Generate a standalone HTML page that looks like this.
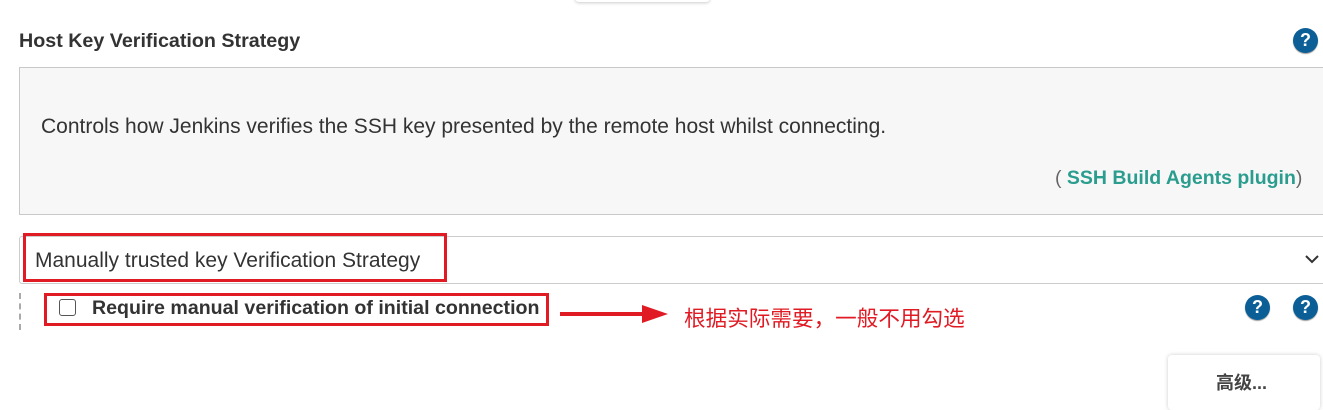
<!DOCTYPE html>
<html><head><meta charset="utf-8"><style>
body{margin:0;width:1323px;height:405px;background:#fff;position:relative;overflow:hidden;font-family:"Liberation Sans","Noto Sans CJK SC",sans-serif;color:#333}
.a{position:absolute;white-space:nowrap}
.help{position:absolute;width:25px;height:25px;border-radius:50%;background:#0b5f96;color:#fff;font:bold 18px/25px "Liberation Sans",sans-serif;text-align:center;box-shadow:0 1px 1px #999}
</style></head><body>
<div class="a" style="left:575px;top:-6px;width:135px;height:8px;border-radius:4px;box-shadow:0 1px 3px #ccc"></div>
<div class="a" style="left:19px;top:30px;font-size:19.7px;font-weight:bold;color:#333">Host Key Verification Strategy</div>
<div class="help" style="left:1293px;top:28px">?</div>
<div class="a" style="left:19px;top:67px;width:1310px;height:146px;background:#f7f7f7;border:1px solid #c8c8c8"></div>
<div class="a" style="left:41px;top:115px;font-size:21px;color:#333">Controls how Jenkins verifies the SSH key presented by the remote host whilst connecting.</div>
<div class="a" style="left:1055px;top:167px;font-size:19.5px;color:#666">( <b style="color:#2a9d8f">SSH Build Agents plugin</b>)</div>
<div class="a" style="left:19px;top:236px;width:1310px;height:46px;border:1px solid #ccc;border-right:none;border-radius:3px 0 0 3px"></div>
<div class="a" style="left:35px;top:249px;font-size:21px;color:#333">Manually trusted key Verification Strategy</div>
<svg class="a" style="left:1304px;top:253px" width="16" height="12"><path d="M2 3l6 6 6-6" fill="none" stroke="#333" stroke-width="2"/></svg>
<div class="a" style="left:23px;top:233px;width:418px;height:43px;border:3px solid #e01b24"></div>
<div class="a" style="left:19px;top:293px;height:37px;border-left:2px dashed #aaa"></div>
<div class="a" style="left:44px;top:293px;width:499px;height:27px;border:3px solid #e01b24"></div>
<div class="a" style="left:59px;top:299px;width:15px;height:15px;border:1.5px solid #555;border-radius:3px"></div>
<div class="a" style="left:92px;top:297px;font-size:19.6px;font-weight:bold;color:#333">Require manual verification of initial connection</div>
<svg class="a" style="left:558px;top:303px" width="112" height="22"><path d="M2 11H88" stroke="#e01b24" stroke-width="4"/><path d="M84 2L110 11 84 20z" fill="#e01b24"/></svg>
<div class="a" style="left:684px;top:302px;font-size:21.6px;color:#e01b24">根据实际需要，一般不用勾选</div>
<div class="help" style="left:1245px;top:295px">?</div>
<div class="help" style="left:1293px;top:295px">?</div>
<div class="a" style="left:1168px;top:355px;width:152px;height:55px;background:#fff;border-radius:4px;box-shadow:0 0 4px rgba(0,0,0,.2)"></div>
<div class="a" style="left:1216px;top:369px;font-size:18px;font-weight:bold;color:#444">高级...</div>
</body></html>
